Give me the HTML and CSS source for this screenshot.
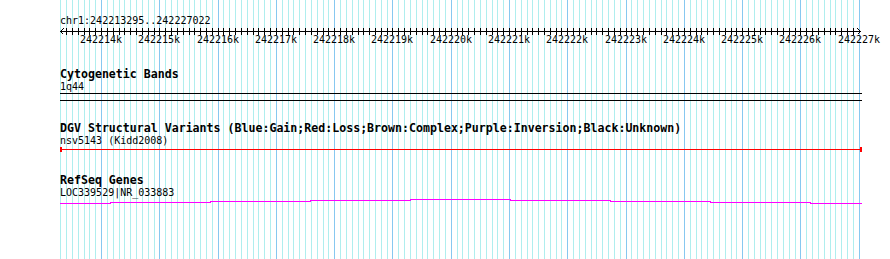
FILE: index.html
```html
<!DOCTYPE html>
<html>
<head>
<meta charset="utf-8">
<title>chr1:242213295..242227022</title>
<link rel="stylesheet" href="styles.css">
</head>
<body>
<div class="panel">
  <svg class="grid" width="890" height="259" viewBox="0 0 890 259" aria-hidden="true">
    <path class="grid-minor" d="M60.5 0v259M66.5 0v259M72.5 0v259M78.5 0v259M84.5 0v259M89.5 0v259M95.5 0v259M107.5 0v259M113.5 0v259M119.5 0v259M124.5 0v259M130.5 0v259M136.5 0v259M142.5 0v259M148.5 0v259M154.5 0v259M165.5 0v259M171.5 0v259M177.5 0v259M183.5 0v259M189.5 0v259M194.5 0v259M200.5 0v259M206.5 0v259M212.5 0v259M223.5 0v259M229.5 0v259M235.5 0v259M241.5 0v259M247.5 0v259M253.5 0v259M258.5 0v259M264.5 0v259M270.5 0v259M282.5 0v259M288.5 0v259M293.5 0v259M299.5 0v259M305.5 0v259M311.5 0v259M317.5 0v259M323.5 0v259M328.5 0v259M340.5 0v259M346.5 0v259M352.5 0v259M358.5 0v259M363.5 0v259M369.5 0v259M375.5 0v259M381.5 0v259M387.5 0v259M398.5 0v259M404.5 0v259M410.5 0v259M416.5 0v259M422.5 0v259M427.5 0v259M433.5 0v259M439.5 0v259M445.5 0v259M457.5 0v259M462.5 0v259M468.5 0v259M474.5 0v259M480.5 0v259M486.5 0v259M492.5 0v259M497.5 0v259M503.5 0v259M515.5 0v259M521.5 0v259M527.5 0v259M532.5 0v259M538.5 0v259M544.5 0v259M550.5 0v259M556.5 0v259M561.5 0v259M573.5 0v259M579.5 0v259M585.5 0v259M591.5 0v259M596.5 0v259M602.5 0v259M608.5 0v259M614.5 0v259M620.5 0v259M631.5 0v259M637.5 0v259M643.5 0v259M649.5 0v259M655.5 0v259M661.5 0v259M666.5 0v259M672.5 0v259M678.5 0v259M690.5 0v259M696.5 0v259M701.5 0v259M707.5 0v259M713.5 0v259M719.5 0v259M725.5 0v259M731.5 0v259M736.5 0v259M748.5 0v259M754.5 0v259M760.5 0v259M765.5 0v259M771.5 0v259M777.5 0v259M783.5 0v259M789.5 0v259M795.5 0v259M806.5 0v259M812.5 0v259M818.5 0v259M824.5 0v259M830.5 0v259M835.5 0v259M841.5 0v259M847.5 0v259M853.5 0v259"/>
    <path class="grid-major" d="M101.5 0v259M159.5 0v259M218.5 0v259M276.5 0v259M334.5 0v259M392.5 0v259M451.5 0v259M509.5 0v259M567.5 0v259M626.5 0v259M684.5 0v259M742.5 0v259M800.5 0v259M859.5 0v259"/>
  </svg>

  <div class="tracks">
    <section class="ruler">
      <div class="ruler-label">chr1:242213295..242227022</div>
      <svg class="ruler-axis" width="830" height="19" viewBox="0 0 830 19">
        <path class="axis-line" d="M0 4.5H801M3.5 1.5L0.5 4.5L3.5 7.5M797.5 1.5L800.5 4.5L797.5 7.5"/>
        <path class="axis-ticks" d="M6.5 1v7M12.5 1v7M18.5 1v7M24.5 1v7M29.5 1v7M35.5 1v7M41.5 1v7M47.5 1v7M53.5 1v7M59.5 1v7M64.5 1v7M70.5 1v7M76.5 1v7M82.5 1v7M88.5 1v7M94.5 1v7M99.5 1v7M105.5 1v7M111.5 1v7M117.5 1v7M123.5 1v7M129.5 1v7M134.5 1v7M140.5 1v7M146.5 1v7M152.5 1v7M158.5 1v7M163.5 1v7M169.5 1v7M175.5 1v7M181.5 1v7M187.5 1v7M193.5 1v7M198.5 1v7M204.5 1v7M210.5 1v7M216.5 1v7M222.5 1v7M228.5 1v7M233.5 1v7M239.5 1v7M245.5 1v7M251.5 1v7M257.5 1v7M263.5 1v7M268.5 1v7M274.5 1v7M280.5 1v7M286.5 1v7M292.5 1v7M298.5 1v7M303.5 1v7M309.5 1v7M315.5 1v7M321.5 1v7M327.5 1v7M332.5 1v7M338.5 1v7M344.5 1v7M350.5 1v7M356.5 1v7M362.5 1v7M367.5 1v7M373.5 1v7M379.5 1v7M385.5 1v7M391.5 1v7M397.5 1v7M402.5 1v7M408.5 1v7M414.5 1v7M420.5 1v7M426.5 1v7M432.5 1v7M437.5 1v7M443.5 1v7M449.5 1v7M455.5 1v7M461.5 1v7M467.5 1v7M472.5 1v7M478.5 1v7M484.5 1v7M490.5 1v7M496.5 1v7M501.5 1v7M507.5 1v7M513.5 1v7M519.5 1v7M525.5 1v7M531.5 1v7M536.5 1v7M542.5 1v7M548.5 1v7M554.5 1v7M560.5 1v7M566.5 1v7M571.5 1v7M577.5 1v7M583.5 1v7M589.5 1v7M595.5 1v7M601.5 1v7M606.5 1v7M612.5 1v7M618.5 1v7M624.5 1v7M630.5 1v7M636.5 1v7M641.5 1v7M647.5 1v7M653.5 1v7M659.5 1v7M665.5 1v7M671.5 1v7M676.5 1v7M682.5 1v7M688.5 1v7M694.5 1v7M700.5 1v7M705.5 1v7M711.5 1v7M717.5 1v7M723.5 1v7M729.5 1v7M735.5 1v7M740.5 1v7M746.5 1v7M752.5 1v7M758.5 1v7M764.5 1v7M770.5 1v7M775.5 1v7M781.5 1v7M787.5 1v7M793.5 1v7"/>
        <g class="axis-labels">
          <text x="41" y="16">242214k</text>
          <text x="99" y="16">242215k</text>
          <text x="158" y="16">242216k</text>
          <text x="216" y="16">242217k</text>
          <text x="274" y="16">242218k</text>
          <text x="332" y="16">242219k</text>
          <text x="391" y="16">242220k</text>
          <text x="449" y="16">242221k</text>
          <text x="507" y="16">242222k</text>
          <text x="566" y="16">242223k</text>
          <text x="624" y="16">242224k</text>
          <text x="682" y="16">242225k</text>
          <text x="740" y="16">242226k</text>
          <text x="799" y="16">242227k</text>
        </g>
      </svg>
    </section>

    <section class="track track-cyto">
      <div class="track-title">Cytogenetic Bands</div>
      <div class="feature-label">1q44</div>
      <svg class="glyph" width="802" height="8" viewBox="0 0 802 8">
        <path class="band-outline" d="M0 0.5H802M0 7.5H802"/>
      </svg>
    </section>

    <section class="track track-dgv">
      <div class="track-title">DGV Structural Variants (Blue:Gain;Red:Loss;Brown:Complex;Purple:Inversion;Black:Unknown)</div>
      <div class="feature-label">nsv5143 (Kidd2008)</div>
      <svg class="glyph" width="802" height="5" viewBox="0 0 802 5">
        <path class="variant-line" d="M0 2.5H802"/>
        <rect class="variant-end" x="0" y="0" width="2" height="5"/>
        <rect class="variant-end" x="800" y="0" width="2" height="5"/>
      </svg>
    </section>

    <section class="track track-refseq">
      <div class="track-title">RefSeq Genes</div>
      <div class="feature-label">LOC339529|NR_033883</div>
      <svg class="glyph" width="802" height="5" viewBox="0 0 802 5">
        <path class="gene-line" d="M0 4.5H50V3.5H150V2.5H250V1.5H350V0.5H450V1.5H550V2.5H650V3.5H750V4.5H802"/>
      </svg>
    </section>
  </div>
</div>
</body>
</html>
```

FILE: styles.css
```css
html, body {
  margin: 0;
  padding: 0;
  background: #ffffff;
}

.panel {
  position: relative;
  width: 890px;
  height: 259px;
  overflow: hidden;
  font-family: "DejaVu Sans Mono", "Liberation Mono", monospace;
  color: #000000;
  white-space: nowrap;
}

.grid {
  position: absolute;
  left: 0;
  top: 0;
  display: block;
}

.grid path {
  fill: none;
  stroke-width: 1;
  shape-rendering: crispEdges;
}

.grid-minor {
  stroke: #afeeee;
}

.grid-major {
  stroke: #87c8f0;
}

.tracks {
  position: relative;
  padding-left: 60px;
}

.ruler-label {
  padding-top: 15px;
  font-size: 10px;
  line-height: 12px;
}

.ruler-axis {
  display: block;
  overflow: visible;
}

.axis-line,
.axis-ticks {
  fill: none;
  stroke: #000000;
  stroke-width: 1;
  shape-rendering: crispEdges;
}

.axis-labels text {
  font-family: "DejaVu Sans Mono", "Liberation Mono", monospace;
  font-size: 10px;
  text-anchor: middle;
  fill: #000000;
}

.track-cyto {
  margin-top: 22px;
}

.track-dgv {
  margin-top: 21px;
}

.track-refseq {
  margin-top: 22px;
}

.track-title {
  font-weight: bold;
  font-size: 11.6px;
  line-height: 12px;
}

.feature-label {
  font-size: 10px;
  line-height: 13px;
}

.glyph {
  display: block;
  overflow: visible;
}

.glyph path {
  fill: none;
  stroke-width: 1;
  shape-rendering: crispEdges;
}

.band-outline {
  stroke: #000000;
}

.variant-line {
  stroke: #ff0000;
}

.variant-end {
  fill: #ff0000;
}

.gene-line {
  stroke: #ff00ff;
}
```
